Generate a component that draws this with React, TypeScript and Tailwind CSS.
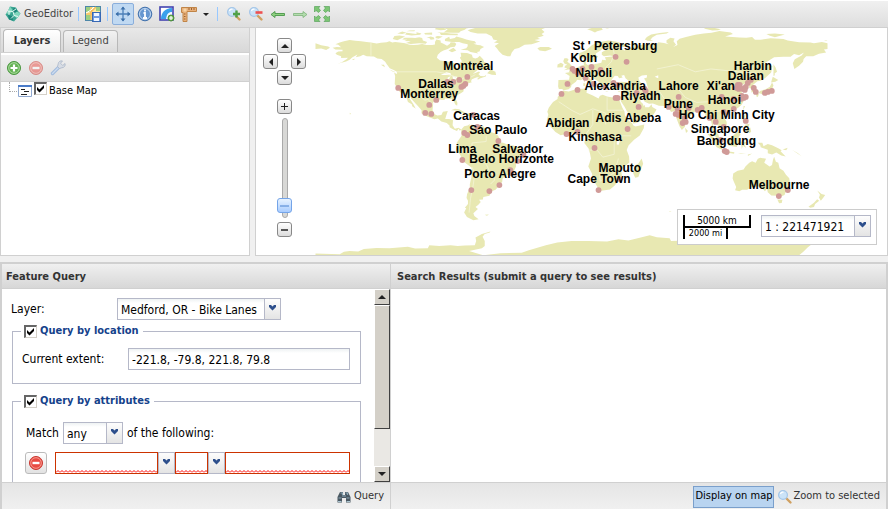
import React, { useState } from 'react';

const LAND: string[] = [
  // North and Central America
  '-168,66 -165,66.4 -162,66.2 -164,68 -166,68.3 -163,69.6 -160,70.5 -156,71.3 -152,70.8 -148,70.4 -144,70 -141,69.6 -137,68.9 -134,69.5 -130,69.7 -128,70.4 -126,69.6 -124,70 -121,69.6 -117,69 -114,68 -111,67.8 -108,68 -105,68.6 -102,67.8 -98,67.8 -96,68.2 -96,70 -95,71.7 -92,71 -92,69.6 -90,68.8 -87.5,67.3 -85.5,68.8 -85,69.7 -82,69.6 -81,68.5 -82,66.7 -85,66.3 -87,65 -90,64 -92,63 -94,61 -94.7,58.8 -92.4,57 -88,56.5 -82.3,55.2 -82,52.8 -80,51.3 -78.6,52.2 -79.5,54.5 -77,56.5 -78.5,58.8 -77.5,60 -78,62.4 -73.5,62.3 -70,61 -69.5,59 -67.7,58.3 -66,58.8 -64.5,60.3 -62,57.7 -61.5,56 -59,54.8 -57,53.5 -55.7,52 -58.5,51.2 -60,50.2 -66,50.2 -69.5,47.5 -65,49.2 -64.3,48.4 -65.5,47.5 -64,46 -61.5,45.8 -60,46.8 -60.3,45.7 -64,44.5 -66,43.5 -66,44.6 -64.5,45.5 -67,45 -70,43.7 -70.7,42.3 -70,41.6 -74,40.6 -75.4,38.5 -76.3,39 -75.8,36.5 -76,35.2 -77.8,34 -79.5,33 -81.2,31.7 -81.4,30 -80.2,27 -80.4,25.2 -81.7,26 -82.7,28.2 -84,30 -85.5,29.8 -89,30.3 -89.3,29.2 -91,29.3 -94,29.6 -97.2,27.7 -97.4,25 -97.7,22 -96.3,19.2 -94.3,18.2 -91.5,18.6 -90.4,21 -87,21.5 -88,18.5 -88.8,15.9 -86,15.9 -83.3,15 -83.6,11.5 -82,9 -79.5,9.6 -77.5,8.5 -78.5,7.5 -79.5,8.9 -80.5,7.4 -83,8.4 -85.7,10 -85.8,11.2 -87.7,13 -91.5,14 -94,16.1 -96.5,15.7 -101.8,17.8 -105.5,19.8 -105.4,22 -108,25 -109.5,26.6 -112.8,30.2 -113.2,31.4 -114.8,31.8 -113,29 -111,26 -109.5,23 -112,24.8 -112.3,26.2 -115,27.8 -115.8,30.3 -117.2,33 -118.6,34 -120.6,34.6 -122.5,37.5 -124.3,40.4 -124,46 -124.7,48.4 -122.6,47.4 -122.8,49 -125,50.2 -127.8,51.5 -130,54.5 -131,56 -133.5,58 -136.5,58.3 -139,59.7 -144,60 -146.5,61 -148.5,60 -151.7,59.3 -150.5,61.2 -154,59.2 -156,57.5 -158.5,56.2 -164.5,54.6 -161.5,55.8 -158,58 -157.2,58.8 -162,58.7 -162,59.9 -165,61 -166,62 -164,63.2 -161,63.5 -161,64.5 -166,64.6',
  // Greenland and the Arctic islands
  '-73,78.3 -71,79 -65,80.5 -60,82.5 -20,82.5 -18,80 -21,79 -19,77 -21,75.5 -19.5,74.3 -24,73 -22,72 -26,71.3 -22,70.3 -28,68.3 -33,68 -37,65.8 -40,65 -42,62.5 -43,60 -45,60 -48.5,61 -51,63.5 -52.5,65.5 -54,67.2 -51,69 -54.5,69.6 -52,71 -55,71.7 -56,74 -60,75.9 -66,76 -71,77',
  '-61.5,66.5 -64,65 -64.7,63.3 -66.5,63 -65.5,61.9 -71,62.9 -73,64.2 -78,64.5 -74,65.5 -73,67 -73,68.3 -76.5,69 -79,70 -84,70 -89,70.7 -89,72 -86,73.6 -85.5,72 -82,72.8 -81,73.8 -77,72.8 -74,71.8 -71,71 -68,70.4 -67,69 -69,68.7 -66,67.8 -64,67.6',
  '-117.5,72.9 -112,72.9 -110,72.7 -107,73.3 -105,72.8 -104.5,71 -101.5,69.9 -102.5,68.8 -107,69 -113,68.6 -116.5,69.2 -113,70.4 -117.6,70.6 -115.5,71.5 -119,71.7',
  '-125.7,72.1 -124.5,74.2 -121,74.5 -117,73.8 -119.5,72.6 -122.5,71.2',
  '-117,75.2 -116,76.4 -109,75.6 -109,76.8 -105.5,75.9 -106.5,75 -112.5,74.5',
  '-100,72.8 -102,73 -99,73.9 -96.7,73.1 -96.5,71.9 -99,71.5',
  '-94.5,76.9 -89,76.5 -85,75.9 -80,75.8 -80,74.7 -91.8,74.8 -92.5,76.2', '-95.5,73.8 -94,74.1 -90.5,73.9 -93.5,72.2 -95.6,72.8',
  '-90,76.6 -84,76.4 -79,76.4 -78,77.6 -75,78.6 -74,79.5 -68,80.5 -63,82.5 -92,82.5 -94,80.5 -87,79 -88.5,77.7', '-96,79 -95,80.5 -91,80.8 -88,78.6 -92,78.3',
  '-103,75.3 -103.5,76.3 -98,76.6 -98,75.1', '-116,77.6 -114,78 -110,78.2 -110.5,77.6', '-122.5,76 -119,77.3 -116,76.5 -119,75.6', '-86.5,64 -83,66 -81,64 -84,62.8',
  '-59.3,48 -56,51.5 -55.5,50 -53.5,49 -53,46.8 -56,47', '-128,50.7 -124.8,49.2 -123.5,48.4 -126.5,49.5', '-154.5,57.5 -152.5,58.3 -152.8,57.3', '-134,54 -131.8,54 -131.2,52.2',
  '-24,65.5 -22,66.4 -16,66.4 -13.7,65.2 -18.5,63.5 -22.5,64', '-84.8,22 -82,23.1 -79,22.6 -75.5,20.8 -74.3,20.1 -77.5,19.9 -79,21.6', '-74.3,18.5 -73,19.9 -70,19.7 -68.5,18.6 -71.5,17.8', '-78.3,18.3 -76.4,18.1 -77.3,17.8', '-67.2,18.4 -65.7,18.3 -66,18 -67.1,18', '-156,20.2 -155,19.5 -155.8,19',
  // South America
  '-77.5,8.5 -75.5,10.7 -73,11.3 -71.5,12.3 -71.6,10.8 -70,12 -68,10.7 -62,10.7 -61,9.5 -58,7 -54,5.8 -51.7,4.2 -50,1 -50.5,-0.5 -48,-0.8 -44,-2.6 -41,-2.9 -38.5,-3.7 -35.4,-5.2 -34.8,-8 -37.3,-11.5 -39,-13.3 -39,-17.5 -41,-22 -44,-23 -46.5,-24.2 -48.5,-26 -48.7,-28.3 -50.2,-30.3 -53.4,-33.9 -56,-34.9 -58.3,-34.2 -56.8,-36.3 -57.7,-38.1 -62,-39 -62.3,-40.7 -65,-41 -63.8,-42.5 -65.5,-44.5 -67.5,-46 -65.8,-47.5 -69,-50.5 -68.3,-52.3 -65.3,-54.7 -69,-55.4 -73.5,-53 -75.5,-50 -74,-47 -75,-46.5 -72.8,-44 -72.8,-41.7 -73.8,-39.8 -73.4,-37 -71.5,-32.5 -71.5,-30 -70.4,-25 -70.2,-18.5 -72,-17 -76,-14 -78.5,-9 -81.2,-6 -81.2,-4.5 -80,-3 -80.8,-1 -79,1.5 -77.3,4 -77.5,6.5',
  '-61,-51.5 -58,-51.4 -59.5,-52.2',
  // Africa
  '-6,35.8 -2,35.1 3,36.8 10,37.3 11,36.9 10.5,34.2 15,32.3 19,30.3 20,32.2 22,32.8 25,31.7 29,31 32.3,31.2 34.2,27.7 35.6,24 37.3,21 37.5,18.7 39.7,15.2 43,12.5 43.3,11.5 45,10.5 51.2,11.9 50.8,9.3 48,4.3 44,1.2 40.2,-2.7 38.8,-6 40.5,-10.5 40.7,-14.8 37,-17.8 34.8,-20 35.5,-23.9 32.7,-26 32.5,-28.5 30,-31.3 27,-33.7 25.7,-34 20,-34.8 18.3,-33.8 18.2,-31.8 15.2,-27 14.3,-22.3 11.8,-17.5 13.7,-12 13,-8.5 12,-5 9,-1 9.6,2.3 9.6,4 8.5,4.7 6,4.3 4,6.4 1,5.9 -2,4.8 -4,5.2 -7.6,4.4 -11.3,6.7 -13.3,9 -16.5,12.3 -17.4,14.8 -16.3,19 -17,21 -16,23.7 -13,27.8 -9.8,29.8 -9.7,31.5 -6.8,34',
  '49.3,-12 50.4,-15.6 49.5,-18 47,-25 44.8,-25.4 43.3,-22.2 44.3,-17 47,-15.5',
  // Eurasia
  '-9.4,38.7 -9.2,43.2 -1.7,43.4 -1.3,46 -4.6,48.2 -1.5,48.7 -1.8,49.7 1.6,50.4 4.5,52.3 7,53.5 8.8,54 8.2,57 10.6,57.7 10,55 11,54 14,54 18.5,54.8 21,55.3 21.5,57.5 24.3,57.2 23.5,59.2 30,59.9 27,60.4 22.8,60 21.3,61 21.3,62.8 25.4,65 22,65.8 21,64.3 17.3,62 17.2,60.6 18.8,59.8 16.5,57.5 14.3,55.5 13,55.4 11,59 8,58.2 5.4,59 5,61.8 10,64 14.5,67.8 19,69.8 26,71 31,70.3 41,67.5 40,66.4 33,66.6 37,64 40,65 44,66.2 43.5,68.5 46,67.8 46,66.8 48,67.6 53.5,68.7 60,68.7 61,69.8 65,69.2 68.5,68.3 66.8,69.5 66.8,71.2 69.5,73 72.5,72.5 71.7,70.5 73.5,68 71.5,66.4 74.5,67.8 74,70.5 76,72.2 80.5,73.5 87,75 93,76 98.5,76.4 104,77.7 112,76.7 113.5,75.5 108,73.8 118,73.2 123,73 127,73.4 129,71.5 133,71.6 140,72.6 149,72 152,71 160,69.7 168,69.6 170.5,69 176,69.9 180,69 180,65 177.5,64.7 179,62.5 174,61.7 170,60 165,60 163.2,58 162.8,56.1 160,53.2 156.7,51 155.6,55 157,57.8 161.8,60.5 163.5,62.5 160,60.7 156.5,61.6 154,59.6 149,59.6 142.5,59.2 138,56.5 135.2,54.7 139,54 141.3,53 140.4,48.5 136,44.5 133,42.8 130.7,42.3 127.5,39.8 129.4,37 129.2,35.3 126.4,34.5 126.8,37 124.8,38 125,39.5 121.3,38.9 121.8,40.8 118,39 119,37.3 122.4,37.2 119.3,35 121.8,31.8 121.8,29.5 119.5,25.6 117,23.6 114,22.3 110.3,21.2 108,21.6 105.8,19 107,17 109,14 109.2,11.7 106.7,10.4 105,8.7 104.8,10.4 102.8,11.5 101,12.7 100,13.3 99.3,10 100.3,8.3 103.3,5 104.1,1.4 101.3,3 100.3,6.3 98.3,8.3 98.7,12 97.6,16.2 94.3,16 94,19 92,22 90.5,22.6 87,21.3 85,19.5 82.2,16.6 80.2,15 80.2,13 79.8,10.3 77.6,8.1 76,10.5 74.3,15 72.8,19 72.6,21.5 70,20.8 69,22.4 66.7,25 61.5,25.1 57.2,26.8 54.5,26.6 51.5,27.9 50,30.2 48,30 48.8,27.8 50.2,26.5 50.8,24.7 51.6,25.8 51.8,24 54.5,24.1 56.3,26.2 56.8,24.2 59.8,22.5 57.7,19 55,17.2 52,15.7 45,12.8 43.3,12.7 42.5,16.5 39,21.3 37.3,24.5 34.8,28.1 34.2,31.3 36,34.5 36,36.6 30.5,36.5 27.5,37 26.4,39.3 27,40.4 29.2,41.2 35,42 41.5,41.5 38,44.5 37,46.8 35,46.2 36,45 33.5,44.5 32.5,46 30.5,46.2 28.6,44 27.7,42.5 28.8,41.2 26.3,40.7 23.5,40.3 24,38 23,36.5 21.3,37.2 19.5,40.6 19.4,41.9 14.5,45 13.4,45.7 12.3,45 13.6,43.5 16,41.8 18.4,40 16.8,40.5 16.6,38.7 15.7,38 15.5,40 12.5,41.5 10.3,43.8 8.7,44.4 6.5,43.1 4,43.5 3.1,42 0,39.8 -0.3,38.3 -2,36.8 -5.5,36.1 -6.6,37 -8.9,37',
  '-5.5,50.1 -3,51.4 -5,52 -4.5,53.3 -3,54 -5,54.8 -5.8,56.5 -5,58.5 -3,58.5 -2,57.5 -3,56 -1.5,55 0.3,53 1.7,52.6 1.3,51.2', '-10,52 -9.8,54.2 -7.5,55.3 -5.6,54.4 -6.3,52.2', '12.5,38 15.5,38.2 15.1,36.7', '8.3,41 9.7,41 9.6,39.2 8.4,39', '8.7,42.6 9.4,43 9.4,41.5', '23.6,35.5 26.2,35.2 24.8,34.9', '32.4,35 34.5,35.6 33.5,34.6',
  '11,79 15,80 21,80.2 22,78.5 18,77.5 16.5,76.6 14,77.8', '22,80.2 28,80 25,79.5', '46,80.3 60,80.8 62,81.5 50,81', '51.5,71.8 53,73.5 56,75.2 62,76.3 68.5,77 67,76 60,75 57,73.3 55.5,71.5 57.5,70.6 53.5,70.8', '93,79.5 97,80.5 105,79 103,78.3 99,78', '137,75.5 143,76 150,75.2 143,73.3 139.5,74.4', '179,71.4 177.5,71.1 180,70.8', '-180,69 -176,67.6 -171,66.8 -169.8,66 -172.5,64.4 -176,65.4 -180,65',
  '142,54.3 143.5,52 144.5,49 142.8,47.8 143,46.5 142,46', '141.5,45.5 145.4,43.3 143.3,42 140.3,41.5', '141,41.5 142,39.5 140.8,36 139.8,35 136,33.6 131.5,34 132.5,35.5 136.5,36.8 139.5,38.5', '130,33.7 131.8,33.5 131,31.3 130,31.6', '132.5,33.7 134.5,34.2 134,33.3', '121,25 122,25 120.8,22', '108.8,20 111,20 109.5,18.3', '79.8,9.7 81.9,7.3 80.5,6',
  '95.3,5.6 98,4.8 103.5,-0.5 106,-3 105.8,-5.8 102,-4 98.7,1.5', '105.2,-6.6 108.5,-6.6 114.5,-7.6 114.3,-8.6 106.5,-7.4', '109,1.5 111.5,2.5 116.8,7 119,5.2 117.5,3 118,0.8 116.2,-3.8 110.3,-2.9', '119.2,-0.5 120.5,1.2 125,1.6 120.5,0.5 123.2,-0.8 121.5,-2 122.8,-4.5 120.5,-3 119.7,-5.5', '120.2,16 120.8,18.5 122.2,18.4 121.7,15.8 124,13 120.6,13.9', '122.2,7 123.5,8.6 125.7,9.8 126.3,7 125.3,5.8 124,7', '122,11.8 125.2,12.4 124.5,10.2 122.5,9.5', '117,8.3 119.4,11.2 118.5,9.5', '127.5,1.8 128.6,1 127.8,-0.8', '124,-9.2 127,-8.4 124,-10.2', '117,-8.4 122.8,-8.4 119,-8.8',
  '131,-0.8 134.2,-0.9 135,-3.3 138,-1.7 141,-2.7 145.7,-5 147.8,-6.2 147,-6.8 150.6,-10.5 147.5,-9.8 144,-7.7 141,-9.1 138,-8.3 138,-5.8 133,-4 132.8,-2.8', '148.5,-5.7 152,-4.4 151,-6.1', '155,-5.8 159,-8 162,-10.5', '164.2,-20.2 167,-22.3',
  // Australia, Tasmania and New Zealand
  '113.7,-22.5 116.8,-20.6 121,-19.6 122.3,-17.5 125,-15 127,-13.9 129.5,-15 131,-12.2 132.7,-11.4 136.8,-12.2 135.5,-14.9 139.3,-17.6 141,-16.5 141.7,-12.7 142.5,-10.8 143.7,-14.3 145.4,-15 146.3,-18.8 149,-20.5 150.8,-23.3 153.1,-25.8 153.5,-28.5 152.5,-32.5 150.2,-36.3 149.8,-37.6 146.4,-39.1 144.5,-38.2 140.5,-38 138,-35.7 137.5,-33.3 136,-34.9 134,-32.7 131,-31.5 126,-32.3 123.5,-33.9 120,-34 118,-35 115,-34.3 115.8,-32 114,-28 113.3,-26', '144.7,-40.8 148.3,-41 147.8,-43.2 146,-43.5', '172.8,-34.5 175.8,-37 178.4,-37.7 177,-39.5 175.3,-41.6 174,-39.4 174.7,-37.5', '172.7,-40.6 174.2,-41.6 171.3,-44 170.5,-46 168,-46.6 166.6,-45.8 170.5,-43',
  '68.8,-49 70.4,-49.3 69,-49.6', '178,-17.6 178.6,-18',
  // Antarctica
  '-180,-84 -180,-78.8 -163,-79.3 -160,-77.5 -156,-77 -150,-77.4 -146,-75.6 -137,-74.8 -128,-75 -115,-74 -110,-75.2 -101,-75 -100,-73 -93,-73.5 -85,-73 -80,-73.5 -75,-73.2 -68,-73 -67,-70 -67.5,-67.5 -63,-65 -57,-63.3 -57.5,-64 -61,-65 -62.5,-67 -61,-70 -61,-73.5 -63,-75 -72,-77 -62,-80 -50,-78.5 -35,-78.3 -30,-76.5 -18,-73 -10,-71 0,-70 12,-70 25,-70.3 33,-68.7 40,-69.6 48,-67.6 55,-66 60,-67.4 69,-68 70,-70 75,-69.7 82,-67.3 90,-66.8 100,-65.8 103,-65.5 110,-66.3 120,-66.8 130,-66.2 137,-66.5 145,-67.2 150,-68.4 160,-70 170,-71.3 166,-74.5 163,-77.5 160,-80 180,-84',
];

const LAKES = ['47,45 49.5,46.4 53,46.7 53,45 51,44.3 52.5,42 53,40 54,37 50,37.3 49,38.5 49.5,40.5 47.5,43', '-92,46.7 -88,48.7 -85,47.9 -84.8,46.6 -88,46.8', '-87.5,41.8 -87,45 -85,45.8 -86.4,43.5', '-83.8,45.8 -80.2,45.5 -82,43.3 -83.3,44.5', '-83,41.6 -79,42.8 -81,42.7', '-79.5,43.3 -76.5,44 -77,43.4', '32,0.3 34,0.3 33,-2.5 31.8,-2', '58.5,45.5 61,46.5 61,44.5'];
const BORDERS = ['-141,69.6 -141,60.3', '-123,49 -95,49 -89,48 -83,46 -79,43 -75,45 -71,45.2 -67.5,47', '-117,32.6 -111,31.4 -106.5,31.8 -103,29 -101,29.6 -97.3,26', '-70,-18 -68,-22 -69,-30 -71,-40 -72,-50', '-60,4 -60,0 -70,-1 -70,-5 -73,-8 -70,-11 -65,-12 -60,-16 -58,-20 -55,-24 -54,-27 -57,-30', '-67,-22 -62,-22 -58,-25', '28,70 30,62 28,56 24,52 24,48', '60,51 75,54 87,49 98,51 117,49 130,48', '75,37 80,31 88,27.5 97,28', '-9,28 0,22 6,19 15,23 24,20 24,12', '25,31 25,22 36,22', '10,5 15,12 15,22', '20,-18 20,-28 25,-25 30,-22 33,-12', '12,-6 18,-6 22,-11 30,-9 30,2 34,4 42,4', '44,37 46,30 39,32', '7,44 8,48 6,51', '14,46 15,51 14,54', '62,35 66,29', '100,20 105,22'];

const CITIES: [number, number][] = [
  [398, 88], [447, 82], [453, 82], [459, 80], [467, 77], [465, 84], [463, 86], [461, 87], [436, 100], [429, 105], [425, 113], [431, 114], [473, 115], [477, 127], [464, 133], [467, 135], [498, 141],
  [462, 160], [523, 155], [517, 161], [510, 170], [511, 173], [499, 185], [489, 191], [471, 190],
  [615, 57], [626, 62], [572, 69], [574, 71], [577, 73], [582, 69], [591, 67], [600, 70], [585, 78], [593, 84], [567, 84], [577, 90], [561, 94], [605, 87], [613, 83], [617, 85], [615, 98], [617, 98], [636, 93], [645, 91], [644, 89], [638, 107], [627, 129], [566, 134], [577, 132], [594, 148], [598, 190], [619, 179],
  [678, 97], [668, 107], [677, 109], [675, 114], [678, 115], [688, 108], [682, 123], [685, 122], [684, 118], [697, 110], [701, 108], [737, 85], [736, 88], [738, 89], [742, 89], [745, 87], [747, 83], [750, 80], [739, 85], [744, 90], [753, 88], [755, 92], [764, 93], [767, 92], [771, 91],
  [721, 97], [733, 99], [741, 96], [743, 98], [745, 97], [740, 99], [723, 112], [733, 109], [709, 118], [715, 122], [723, 127], [745, 121], [720, 140], [724, 151], [726, 152], [787, 190], [778, 196],
];

const LABELS: [string, number, number][] = [
  ['Montréal', 443, 70], ['Dallas', 418, 88], ['Monterrey', 400, 98], ['Caracas', 453, 120], ['Sáo Paulo', 469, 134], ['Lima', 448, 153], ['Salvador', 492, 153], ['Belo Horizonte', 469, 163], ['Porto Alegre', 464, 178],
  ["St ' Petersburg", 572, 50], ['Koln', 570, 62], ['Napoli', 575, 77], ['Alexandria', 584, 90], ['Riyadh', 620, 100], ['Lahore', 658, 90], ['Pune', 663, 108], ['Adis Abeba', 595, 122], ['Abidjan', 545, 127], ['Kinshasa', 568, 141], ['Maputo', 598, 172], ['Cape Town', 567, 183],
  ["Xi'an", 706, 90], ['Hanoi', 707, 104], ['Harbin', 733, 70], ['Dalian', 727, 80], ['Ho Chi Minh City', 678, 119], ['Singapore', 690, 133], ['Bangdung', 696, 145], ['Melbourne', 748, 189],
];

function WorldMap() {
  return (
    <svg className="h-full w-full" viewBox="256 28 630 227" preserveAspectRatio="xMidYMid slice" role="img" aria-label="World map">
      <g transform="translate(571 141.5) scale(1.42 -1.42)">
        {LAND.map((p) => <polygon key={p} points={p} fill="#e8e8b2" />)}
        {LAKES.map((p) => <polygon key={p} points={p} fill="#fff" />)}
        {BORDERS.map((p) => <polyline key={p} points={p} fill="none" stroke="#f5f5dc" strokeWidth="0.5" />)}
      </g>
      {CITIES.map(([x, y]) => <circle key={`${x}-${y}`} cx={x} cy={y} r="2.9" fill="#d09a98" />)}
      <g className="font-['Liberation_Sans',Arial,sans-serif] text-[12px] font-bold" fill="#000">
        {LABELS.map(([t, x, y]) => <text key={t} x={x} y={y}>{t}</text>)}
      </g>
    </svg>
  );
}

const Svg = ({ children }: { children: React.ReactNode }) => <svg width="16" height="16" viewBox="0 0 16 16" aria-hidden="true" className="shrink-0">{children}</svg>;

const Logo = () => (
  <Svg>
    <path d="M5 .5l6 1 1.500 3 3 3-3 4-3.500 4-5-2-3.500-5L3 5z" fill="#3aa592" />
    <path d="M5 .5l3 4-3 3.500-4-.5L3 5zM9 6l4 0 2.500 1.500L12 12.500l-3-3z" fill="#7fd6bd" /><path d="M9 1.500l3.500 3L10 7 7.500 5zM3 9l4 1 1 4.500-4-1z" fill="#1c8479" />
    <path d="M3 5l5 .5 1 4 4 1M8 5l3-2M9 9.500l-3 3M4 5v4" stroke="#effff9" strokeWidth=".9" fill="none" />
  </Svg>
);
const MapSave = () => (
  <Svg>
    <rect x=".5" y=".5" width="15" height="14" fill="#ffe9a0" stroke="#4d87a8" /><path d="M1 1h4v5H1zM1 9h5v5H1zM11 1h4v4h-4z" fill="#9dcf80" />
    <path d="M6 1v13M1 8h14M11 1l-6 6" stroke="#f5bc5c" strokeWidth="1.4" /><path d="M1 7l5-3 3-3" stroke="#fff" fill="none" />
    <rect x="7.500" y="6.500" width="8" height="9" fill="#6f9be0" stroke="#3768b4" /><path d="M9 7h5v3H9zM9 12h5v3H9z" fill="#eef5ff" />
  </Svg>
);
const Pan = () => <Svg><path d="M8 1v14M1 8h14" stroke="#4b7fb8" strokeWidth="1.3" /><path d="M8 .5l2.500 3h-5zM8 15.500l2.500-3h-5zM.5 8l3-2.500v5zM15.500 8l-3-2.500v5z" fill="#3c70aa" /></Svg>;
const Info = () => <Svg><circle cx="8" cy="8" r="6.800" fill="#6797d0" stroke="#4372ac" /><circle cx="8" cy="8" r="5.500" fill="none" stroke="#c3d8f0" /><path d="M8 3.500v2M6.500 7H8v5M6 12h4" stroke="#fff" strokeWidth="1.800" fill="none" /></Svg>;
const AddFeature = () => (
  <Svg><rect x="1" y="1" width="13" height="13" fill="#f2f8ff" stroke="#4444b0" strokeWidth="1.600" /><path d="M13 2v4c-4 0-5 2-6 7H2c0-6 4-11 11-11z" fill="#3aa0ec" /><path d="M2 9c1-4 4-6 8-7H2z" fill="#fff" /><circle cx="12" cy="12" r="3" fill="#6cb352" stroke="#4a8c3c" /><path d="M12 10v4M10 12h4" stroke="#fff" strokeWidth="1.200" /></Svg>
);
const Ruler = () => <Svg><path d="M1 1.500h14.500v4H6v10H2v-9H.500v-5z" fill="#e8b07a" stroke="#c08548" /><path d="M8 2v2M10.500 2v2M13 2v2M3 8h1.500M3 10.500h1.500M3 13h1.500" stroke="#9c6230" /><path d="M2.500 2.500h3v3h-3z" fill="#f7d6a8" /></Svg>;
const Lens = ({ mode }: { mode?: string }) => (
  <Svg>
    <path d="M9.500 9.500l4 4" stroke="#d0a060" strokeWidth="2.400" strokeLinecap="round" /><circle cx="6" cy="6" r="4.400" fill="#cbe3f8" stroke="#a4c6e8" strokeWidth="1.200" /><path d="M3.500 5c.5-1.500 2-2 3-1.700" stroke="#fff" strokeWidth="1.300" fill="none" />
    {mode === 'in' && <path d="M10.500 4.500v7M7 8h7" stroke="#4fa048" strokeWidth="2.400" />}
    {mode === 'out' && <path d="M7.500 6.500h7" stroke="#ee5050" strokeWidth="2.600" />}
  </Svg>
);
const Arrow = ({ right = false }: { right?: boolean }) => (
  <Svg>{right ? <path d="M15 8.500L11 5.500v2H1.500v2H11v2z" fill="#b4dcae" stroke="#7cb47a" strokeWidth=".8" /> : <path d="M1 8.500l4-3v2h9.500v2H5v2z" fill="#8fd080" stroke="#4a964a" strokeWidth=".9" />}</Svg>
);
const Extents = () => <Svg><g fill="#7cc674" stroke="#4c9a50" strokeWidth=".6"><path d="M.5.500H6L4.500 2l2 2.500-2 2L2 4.500.5 6z" /><path d="M15.500.500H10L11.500 2l-2 2.500 2 2 2.500-2L15.500 6z" /><path d="M.5 15.500H6L4.500 14l2-2.500-2-2-2.500 2L.5 10z" /><path d="M15.500 15.500H10l1.500-1.500-2-2.500 2-2 2.500 2 1.500-1.500z" /></g></Svg>;
const Add = () => <Svg><circle cx="8" cy="8" r="6.500" fill="#66b356" stroke="#4a9640" /><circle cx="8" cy="8" r="5.300" fill="none" stroke="#aadb9e" /><path d="M8 4.500v7M4.500 8h7" stroke="#fff" strokeWidth="2.200" /></Svg>;
const Remove = () => <Svg><circle cx="8" cy="8" r="6.500" fill="#e94b43" stroke="#c93730" /><circle cx="8" cy="8" r="5.300" fill="none" stroke="#f59b90" /><path d="M4.500 8h7" stroke="#fff" strokeWidth="2.400" /></Svg>;
const Wrench = () => <Svg><path d="M2.500 13.500L9 7" stroke="#8fb1dc" strokeWidth="3.400" strokeLinecap="round" /><path d="M2.500 13.500L9 7" stroke="#c7daf2" strokeWidth="1.400" strokeLinecap="round" /><path d="M12.500 1L10.500 3.200 12.700 5.500 15 3.500c.8 2-.8 4.300-3 4.200L9.500 8.500 7.600 6.600l.6-2.800C8.300 1.800 10.500.3 12.500 1z" fill="#d5dbe5" stroke="#9aa9c0" strokeWidth=".8" /></Svg>;
const LayerIcon = () => <Svg><path d="M1.500 2.500h13v11h-13z" fill="#fff" stroke="#8fa8d0" /><path d="M1 3h14" stroke="#4b7cc9" strokeWidth="2" /><path d="M4 6.500h4M7 8.500h5M4 11.500h6" stroke="#222" /></Svg>;
const Binoculars = () => <Svg><path d="M4 3h3v3h2V3h3l2.500 5v5.500H10V9H6v4.500H1.500V8z" fill="#4a5862" /><path d="M4.500 4h2v2M9.500 4h2v2M2.500 9h3M10.500 9h3M6 7h4" stroke="#8aa8b8" strokeWidth="1.200" fill="none" /><path d="M2 12.500h3.500M10.500 12.500H14" stroke="#aac4d0" /></Svg>;
const Chevron = () => <svg width="9" height="6" viewBox="0 0 9 6" aria-hidden="true"><path d="M1 0h2l1.500 1.500L6 0h2v2L4.500 5.500 1 2z" fill="#2d4f8c" /></svg>;

const ToolButton = ({ label, pressed = false, children }: { label: string; pressed?: boolean; children: React.ReactNode }) => (
  <button type="button" aria-label={label} className={pressed ? 'flex h-[22px] w-[22px] items-center justify-center rounded-xs border border-[#8aaedb] bg-[#c0d9f2]' : 'flex h-[22px] w-[22px] items-center justify-center'}>{children}</button>
);
const Separator = () => <span className="h-3.5 w-px bg-[#98c8ff]" />;

function Check({ id, label }: { id: string; label?: string }) {
  const [on, setOn] = useState(true);
  return (
    <span className="grid h-[13px] w-[13px] shrink-0">
      <input id={id} aria-label={label} type="checkbox" checked={on} onChange={() => setOn(!on)} className="col-start-1 row-start-1 h-[13px] w-[13px] appearance-none border border-t-2 border-l-2 border-[#d4d0c8] border-t-[#666] border-l-[#666] bg-white" />
      {on && <svg className="pointer-events-none col-start-1 row-start-1" width="13" height="13" viewBox="0 0 13 13"><path d="M3 5l2.500 2.500L10 3v3L5.500 10.500 3 8z" fill="#000" /></svg>}
    </span>
  );
}

const Trigger = () => <span className="pointer-events-none flex w-[17px] items-center justify-center border border-[#b5b8c8] bg-linear-to-b from-[#fdfdfd] to-[#e4e4e4] pb-0.5"><Chevron /></span>;

function Combo({ id, label, value, width }: { id?: string; label?: string; value: string; width: string }) {
  return (
    <span className={`relative inline-flex h-[22px] ${width}`}>
      <select id={id} aria-label={label} className="w-full appearance-none border border-[#b5b8c8] bg-linear-to-b from-[#eef2f3] to-white to-20% pt-0.5 pr-[17px] pl-[3px] text-[12px] text-black"><option>{value}</option></select>
      <span className="pointer-events-none absolute inset-y-0 right-0 flex"><Trigger /></span>
    </span>
  );
}

const Squiggle = ({ id }: { id: string }) => (
  <svg className="pointer-events-none absolute inset-x-px bottom-px h-[3px] w-[calc(100%-2px)]" aria-hidden="true">
    <defs><pattern id={id} width="4" height="3" patternUnits="userSpaceOnUse"><path d="M0 2.500L2 .5 4 2.500" fill="none" stroke="#f00" /></pattern></defs><rect width="100%" height="3" fill={`url(#${id})`} />
  </svg>
);
const InvalidField = ({ id, label, width, combo = false }: { id: string; label: string; width: string; combo?: boolean }) => (
  <span className={`flex h-[22px] ${width}`}>
    <span className="relative flex min-w-0 flex-1"><input aria-label={label} className="w-full min-w-0 border border-[#c30] bg-white px-1 text-[12px]" /><Squiggle id={id} /></span>
    {combo && <Trigger />}
  </span>
);

const ARROWS = { up: 'M0 4L4 0l4 4z', down: 'M0 0h8L4 4z', left: 'M4 0v8L0 4z', right: 'M0 0l4 4-4 4z' };
const Tri = ({ d, w = 8, h = 4 }: { d: string; w?: number; h?: number }) => <svg width={w} height={h} viewBox={`0 0 ${w} ${h}`} fill="#222"><path d={d} /></svg>;
const NavButton = ({ label, className = '', children }: { label: string; className?: string; children: React.ReactNode }) => (
  <button type="button" aria-label={label} className={`flex h-[15px] w-[15px] items-center justify-center rounded-[3px] border border-[#888] bg-linear-to-b from-white to-[#dcdcdc] ${className}`}>{children}</button>
);

const HEADER = 'flex h-[27px] items-center border-t-2 border-b border-[#d0d0d0] bg-linear-to-b from-[#f0f0f0] to-[#d7d7d7] pt-0.5 text-[11px] font-bold text-[#333]';
const FOOTER = 'flex h-[27px] items-center justify-end border-t border-[#d0d0d0] bg-linear-to-b from-[#e5e5e5] to-[#f0f0f0] pt-px';
const SCROLL_BUTTON = 'flex h-4 w-4 shrink-0 items-center justify-center border border-white border-r-[#404040] border-b-[#404040] bg-[#d4d0c8]';
const LEGEND = 'ml-[-1px] flex h-3.5 items-center pr-1 pl-[3px] text-[11px] font-bold text-[#15428b]';

export default function App() {
  return (
    <div className="flex h-screen flex-col overflow-hidden bg-[#f0f0f0] font-['DejaVu_Sans_Condensed',Tahoma,'DejaVu_Sans',sans-serif] text-[11px] text-black">
      <header className="flex h-7 shrink-0 items-center border-t border-b border-t-white border-b-[#d0d0d0] bg-linear-to-b from-[#f0f0f0] to-[#dedede] pl-[5px]">
        <Logo /><span className="mr-2 ml-[3px] w-[46px] whitespace-nowrap text-[#444]">GeoEditor</span>
        <Separator />
        <span className="mx-[3px]"><ToolButton label="Save map"><MapSave /></ToolButton></span>
        <Separator />
        <span className="ml-1 flex">
          <ToolButton label="Pan map" pressed><Pan /></ToolButton>
          <ToolButton label="Get feature info"><Info /></ToolButton>
          <ToolButton label="Create feature"><AddFeature /></ToolButton>
          <ToolButton label="Measure"><Ruler /></ToolButton>
        </span>
        <button type="button" aria-label="Measure options" className="mr-2 ml-[3px]"><Tri d="M0 0h6L3 3z" w={6} h={3} /></button>
        <Separator />
        <span className="ml-[5px] flex">
          <ToolButton label="Zoom in"><Lens mode="in" /></ToolButton>
          <ToolButton label="Zoom out"><Lens mode="out" /></ToolButton>
          <ToolButton label="Previous extent"><Arrow /></ToolButton>
          <ToolButton label="Next extent"><Arrow right /></ToolButton>
          <ToolButton label="Zoom to max extent"><Extents /></ToolButton>
        </span>
      </header>

      <div className="flex min-h-0 flex-1 gap-[5px]">
        <aside className="flex w-[250px] shrink-0 flex-col border border-t-0 border-[#d0d0d0] bg-white">
          <div role="tablist" className="flex h-[25px] items-end gap-0.5 border-b border-[#d0d0d0] bg-linear-to-b from-[#e8e8e8] to-[#d8d8d8] pl-0.5">
            <button role="tab" type="button" aria-selected="true" className="h-[23px] w-[58px] rounded-t border border-b-0 border-[#b8b8b8] bg-linear-to-b from-white to-[#eee] font-bold text-[#333]">Layers</button>
            <button role="tab" type="button" aria-selected="false" className="h-[22px] w-[55px] rounded-t border border-b-0 border-[#b8b8b8] bg-linear-to-b from-[#f2f2f2] to-[#dcdcdc] text-[#444]">Legend</button>
          </div>
          <div className="mt-0.5 flex h-[27px] items-center border-b border-[#d0d0d0] bg-linear-to-b from-[#f0f0f0] to-[#dedede] pl-0.5">
            <ToolButton label="Add layers"><Add /></ToolButton>
            <span className="opacity-50"><ToolButton label="Remove layer"><Remove /></ToolButton></span>
            <span className="opacity-80"><ToolButton label="Layer properties"><Wrench /></ToolButton></span>
          </div>
          <div className="flex h-[18px] items-center pl-2">
            <span className="mb-2 h-2.5 w-2 border-b border-l border-dotted border-[#aaa]" />
            <LayerIcon />
            <span className="ml-px self-start"><Check id="base-map" /></span>
            <label htmlFor="base-map" className="ml-0.5 pt-px">Base Map</label>
          </div>
        </aside>

        <main className="relative min-w-0 flex-1 overflow-hidden border border-[#d0d0d0] border-t-0 bg-white">
          <WorldMap />
          <div className="absolute top-2.5 left-[7px] flex flex-col items-center">
            <div className="grid grid-cols-[15px_13px_15px] grid-rows-[16px_16px_16px] justify-items-center">
              <NavButton label="Pan north" className="col-start-2 row-start-1"><Tri d={ARROWS.up} /></NavButton>
              <NavButton label="Pan west" className="col-start-1 row-start-2"><Tri d={ARROWS.left} w={4} h={8} /></NavButton>
              <NavButton label="Pan east" className="col-start-3 row-start-2"><Tri d={ARROWS.right} w={4} h={8} /></NavButton>
              <NavButton label="Pan south" className="col-start-2 row-start-3"><Tri d={ARROWS.down} /></NavButton>
            </div>
            <NavButton label="Zoom map in" className="mt-[13px]"><svg width="7" height="7"><path d="M3.500 0v7M0 3.500h7" stroke="#222" /></svg></NavButton>
            <div className="mt-1 flex h-[100px] w-1.5 flex-col items-center justify-end rounded-full border border-[#aaa] bg-[#d8d8d6] pb-1">
              <button type="button" aria-label="Zoom level" className="flex h-[15px] w-[15px] shrink-0 items-center justify-center rounded-[3px] border border-[#74a4e8] bg-linear-to-b from-[#e8f3ff] to-[#a8ccff]"><svg width="9" height="2"><path d="M0 1h9" stroke="#4b82d0" /></svg></button>
            </div>
            <NavButton label="Zoom map out" className="mt-1"><svg width="7" height="2"><path d="M0 1h7" stroke="#222" strokeWidth="1.500" /></svg></NavButton>
          </div>
          <div className="absolute right-2.5 bottom-2.5 flex h-9 items-start border border-[#ccc] bg-white p-[5px]">
            <div className="mr-2.5 text-center text-[10px] leading-[11px]">
              <div className="h-[13px] w-[68px] border-2 border-t-0 border-black">5000 km</div>
              <div className="h-[11px] w-[45px] border-x-2 border-black text-[9px]">2000 mi</div>
            </div>
            <Combo label="Map scale" value="1 : 221471921" width="w-[110px]" />
          </div>
        </main>
      </div>

      <div className="mt-1.5 flex h-[247px] shrink-0">
        <section className="flex w-[391px] shrink-0 flex-col border-x border-l-2 border-[#d0d0d0] bg-white">
          <h2 className={`${HEADER} pl-1`}>Feature Query</h2>
          <div className="flex min-h-0 flex-1">
            <form className="min-w-0 flex-1 overflow-hidden py-[9px] pr-[13px] pl-2.5 text-[12px]" onSubmit={(e) => e.preventDefault()}>
              <div className="-ml-px flex items-center"><label htmlFor="layer" className="w-[106px]">Layer:</label><Combo id="layer" value="Medford, OR - Bike Lanes" width="w-[164px]" /></div>
              <fieldset className="mt-1 h-[60px] border border-[#b5b8c8] pr-2.5 pl-[9px]">
                <legend className={LEGEND}><Check id="by-location" /><label htmlFor="by-location" className="ml-[3px]">Query by location</label></legend>
                <div className="mt-2.5 flex items-center"><label htmlFor="extent" className="w-[106px]">Current extent:</label><input id="extent" defaultValue="-221.8, -79.8, 221.8, 79.8" className="h-[22px] min-w-0 flex-1 border border-[#b5b8c8] bg-linear-to-b from-[#eef2f3] to-white to-20% px-[3px] pt-0.5" /></div>
              </fieldset>
              <fieldset className="mt-2.5 h-[120px] border border-[#b5b8c8] pr-2.5 pl-[9px]">
                <legend className={LEGEND}><Check id="by-attributes" /><label htmlFor="by-attributes" className="ml-[3px]">Query by attributes</label></legend>
                <div className="mt-3.5 flex items-center gap-1 pl-1"><label htmlFor="match">Match</label><Combo id="match" value="any" width="w-[60px]" /><span>of the following:</span></div>
                <div className="mt-2 flex pl-[3px]">
                  <button type="button" aria-label="Remove condition" className="mr-2 flex h-[22px] w-[22px] shrink-0 items-center justify-center rounded-[3px] border border-[#bbb] bg-linear-to-b from-white to-[#e2e2e2]"><Remove /></button>
                  <InvalidField id="wave-field" label="Field" width="w-[120px]" combo />
                  <InvalidField id="wave-op" label="Operator" width="w-[50px]" combo />
                  <InvalidField id="wave-value" label="Value" width="flex-1" />
                </div>
              </fieldset>
            </form>
            <div className="flex w-4 flex-col bg-[#eae8e4]">
              <button type="button" aria-label="Scroll up" className={SCROLL_BUTTON}><Tri d={ARROWS.up} /></button>
              <div className="h-[124px] w-4 border border-white border-r-[#404040] border-b-[#404040] bg-[#d4d0c8]" />
              <div className="flex-1" />
              <button type="button" aria-label="Scroll down" className={SCROLL_BUTTON}><Tri d={ARROWS.down} /></button>
            </div>
          </div>
          <footer className={`${FOOTER} pr-1.5`}><button type="button" className="flex items-center gap-0.5 text-[#333]"><Binoculars />Query</button></footer>
        </section>
        <section className="flex min-w-0 flex-1 flex-col border-r-2 border-[#d0d0d0] bg-white">
          <h2 className={`${HEADER} pl-1.5`}>Search Results (submit a query to see results)</h2>
          <div className="flex-1" />
          <footer className={`${FOOTER} gap-[3px] pr-1.5`}>
            <button type="button" aria-pressed="true" className="h-[22px] w-[81px] whitespace-nowrap border border-[#7a9fcb] bg-[#b9d4f0]">Display on map</button>
            <button type="button" className="flex items-center text-[#333]"><Lens />Zoom to selected</button>
          </footer>
        </section>
      </div>
    </div>
  );
}
